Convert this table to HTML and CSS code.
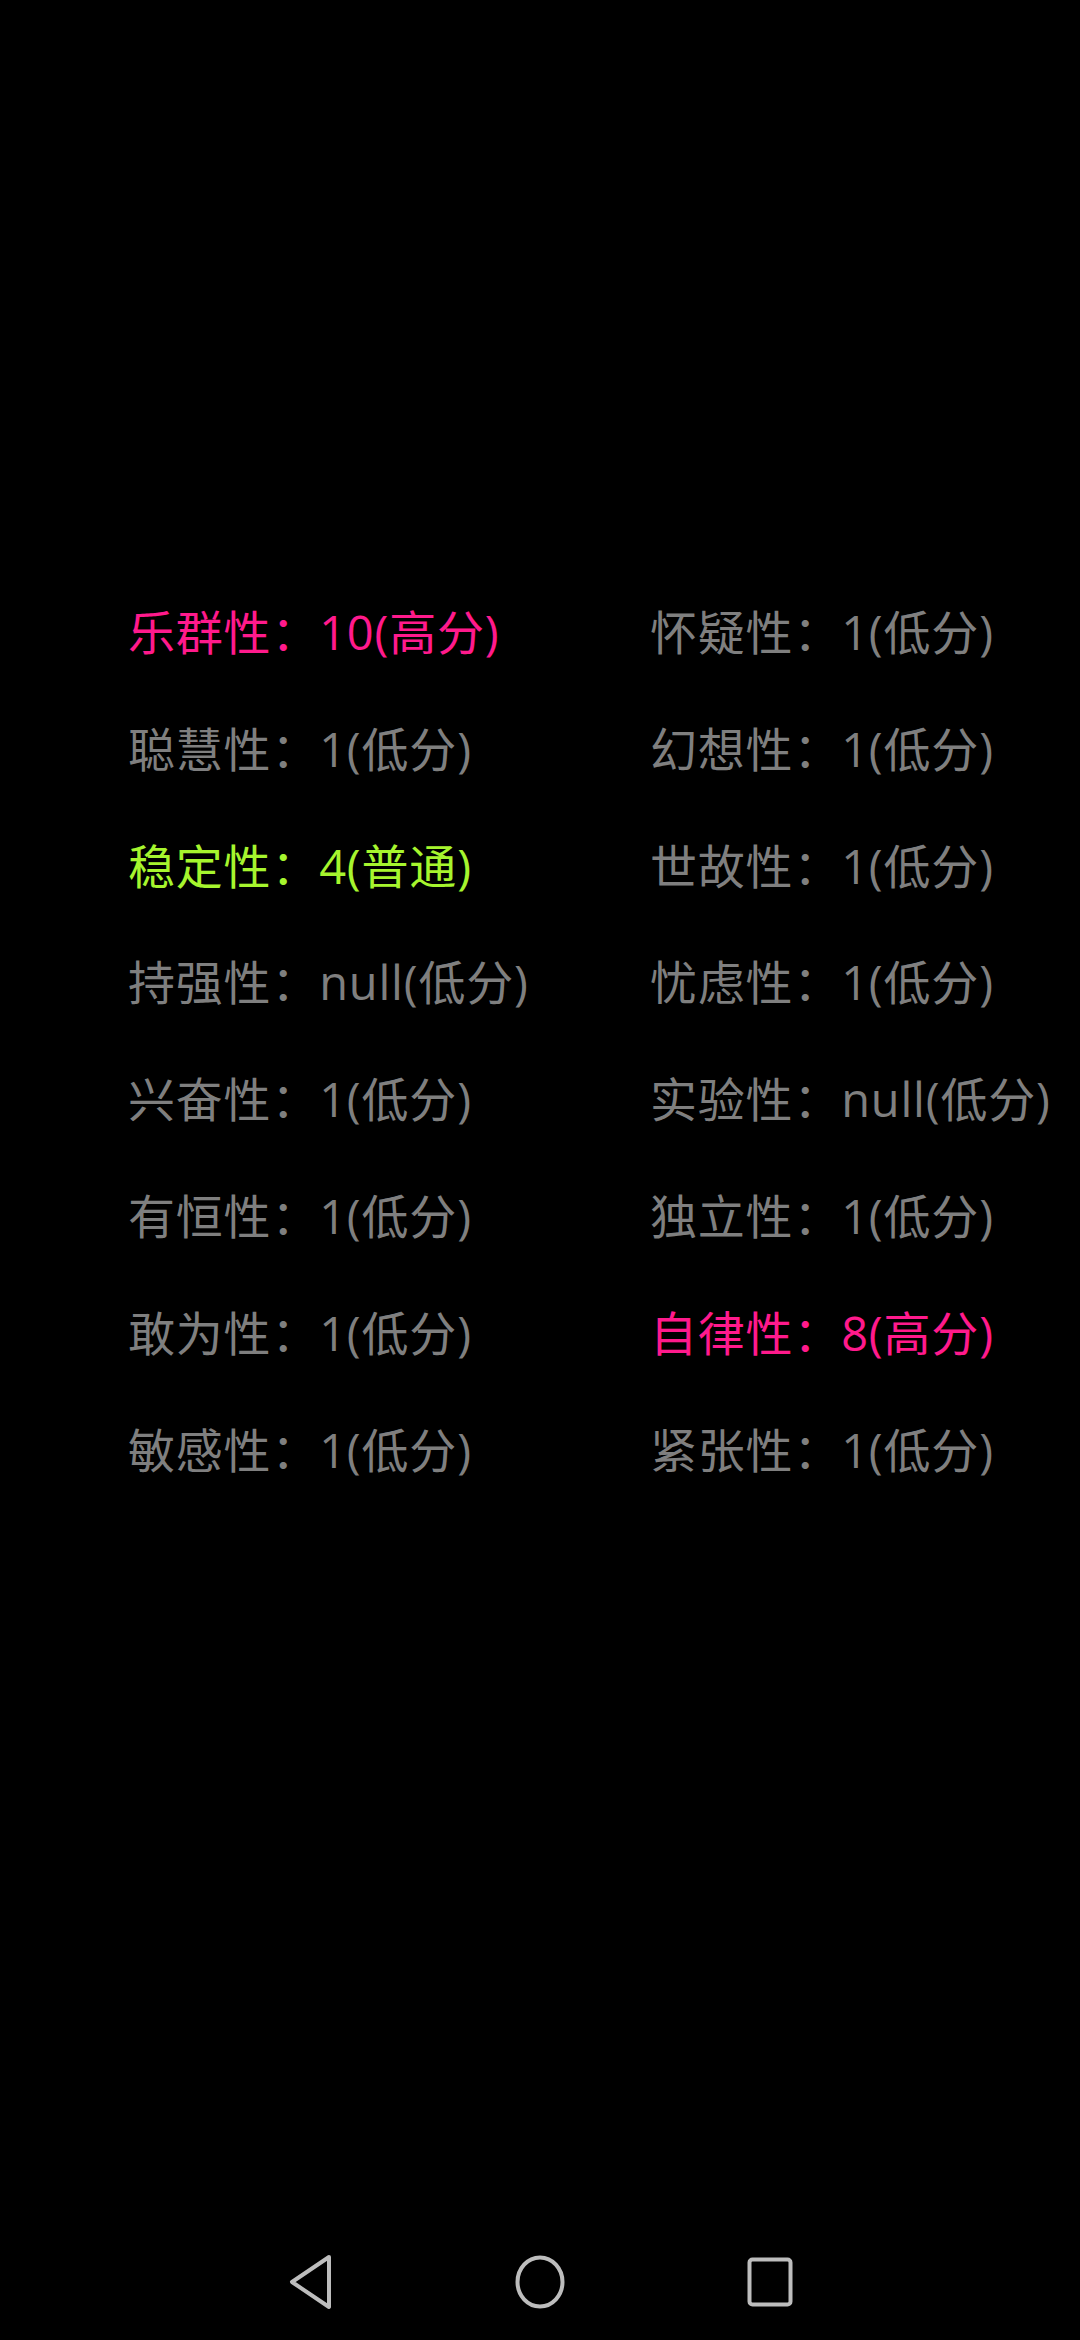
FILE: index.html
```html
<!DOCTYPE html>
<html>
    <head>
        <meta charset="UTF-8">
        <title>16PF</title>
        <link rel="stylesheet" href="styles.css">
    </head>
    <body>
        <div class="page">
            <div class="result-grid">
                <div class="item high">乐群性：10(高分)</div>
                <div class="item">怀疑性：1(低分)</div>
                <div class="item">聪慧性：1(低分)</div>
                <div class="item">幻想性：1(低分)</div>
                <div class="item normal">稳定性：4(普通)</div>
                <div class="item">世故性：1(低分)</div>
                <div class="item">持强性：null(低分)</div>
                <div class="item">忧虑性：1(低分)</div>
                <div class="item">兴奋性：1(低分)</div>
                <div class="item">实验性：null(低分)</div>
                <div class="item">有恒性：1(低分)</div>
                <div class="item">独立性：1(低分)</div>
                <div class="item">敢为性：1(低分)</div>
                <div class="item high">自律性：8(高分)</div>
                <div class="item">敏感性：1(低分)</div>
                <div class="item">紧张性：1(低分)</div>
            </div>

            <!-- Navigation bar -->
            <div class="nav-bar">
                <div class="nav-btn">
                    <svg width="48" height="60" viewBox="0 0 48 60">
                        <path d="M43 5 L6 30 L43 55 Z" fill="none" stroke="#bdbdbd" stroke-width="4" stroke-linejoin="round"/>
                    </svg>
                </div>
                <div class="nav-btn">
                    <svg width="54" height="60" viewBox="0 0 54 60">
                        <ellipse cx="27" cy="30" rx="22.5" ry="24.5" fill="none" stroke="#bdbdbd" stroke-width="4"/>
                    </svg>
                </div>
                <div class="nav-btn">
                    <svg width="50" height="60" viewBox="0 0 50 60">
                        <rect x="4.5" y="7.5" width="41" height="45" rx="3" fill="none" stroke="#bdbdbd" stroke-width="4"/>
                    </svg>
                </div>
            </div>
        </div>
    </body>
</html>
```

FILE: styles.css
```css
html, body {
    margin: 0;
    padding: 0;
    background-color: #000;
}

body {
    font-family: "Open Sans", "Noto Sans CJK SC", sans-serif;
}

.page {
    width: 1080px;
    height: 2340px;
    display: flex;
    flex-direction: column;
}

.result-grid {
    flex: 1;
    display: grid;
    grid-template-columns: 522px 1fr;
    grid-auto-rows: 116.8px;
    padding: 574px 0 0 128px;
}

.item {
    color: #7f7f7f;
    font-size: 47px;
    letter-spacing: 0.8px;
    line-height: 116.8px;
    white-space: nowrap;
}

.item.high {
    color: #ff1a8c;
}

.item.normal {
    color: #a6f52e;
}

.nav-bar {
    height: 104px;
    display: flex;
    justify-content: center;
    align-items: center;
    gap: 130px;
    padding-bottom: 6px;
}

.nav-btn {
    width: 100px;
    display: flex;
    justify-content: center;
}
```
